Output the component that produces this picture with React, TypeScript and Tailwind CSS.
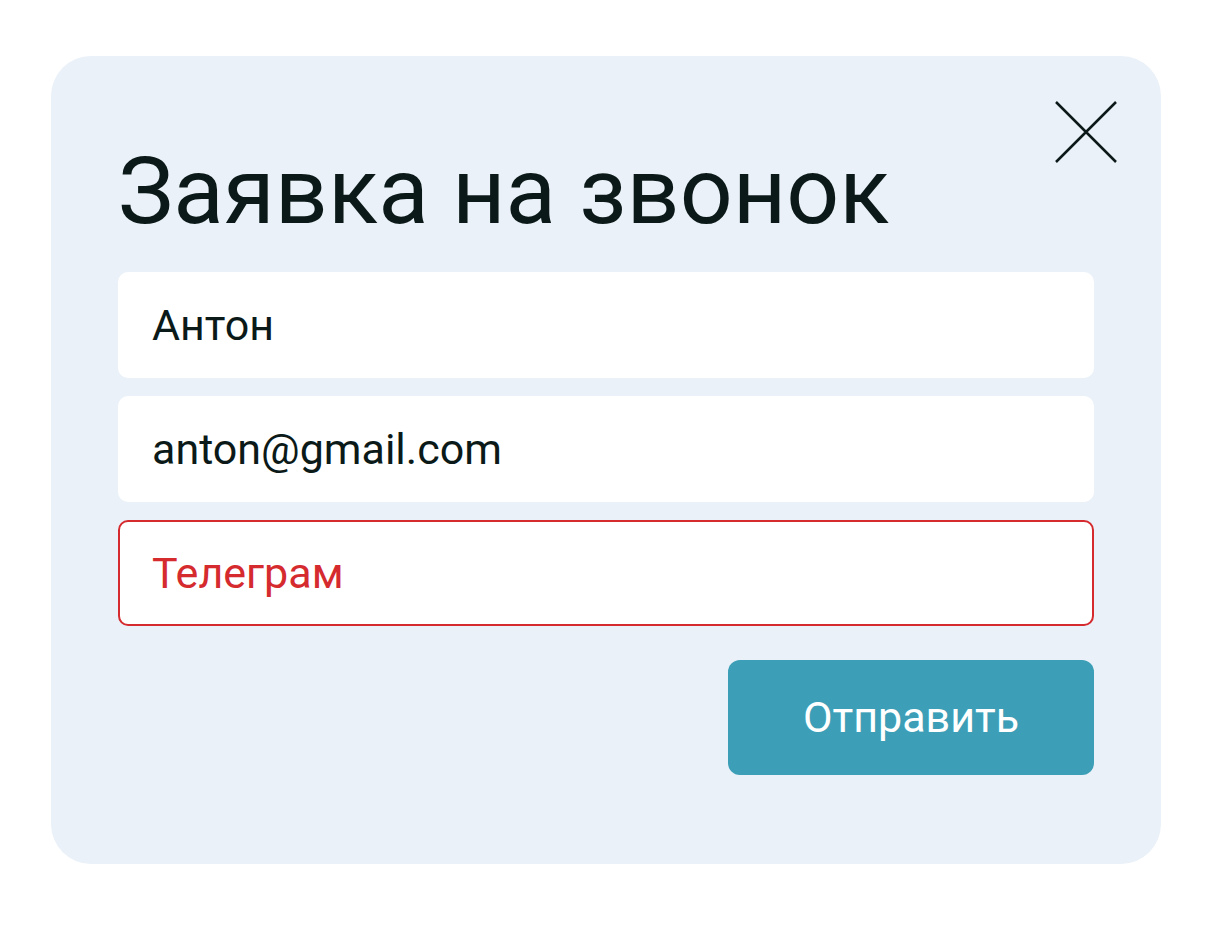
import React from "react";

export default function App() {
  const font = { fontFamily: "Roboto, 'Noto Sans', sans-serif" };
  return (
    <div className="w-[1216px] h-[940px] bg-white pt-[56px] pl-[51px]" style={font}>
      <div className="w-[1110px] h-[808px] bg-[#eaf1f9] rounded-[40px] pl-[67px] pr-[67px] pt-[44px] relative">
        <button className="absolute right-[44px] top-[45px] w-[62px] h-[62px]">
          <svg width="62" height="62" viewBox="0 0 62 62" fill="none">
            <path d="M1 1L61 61M61 1L1 61" stroke="#0b1a18" strokeWidth="2.5" />
          </svg>
        </button>
        <h1 className="text-[93px] leading-[1] text-[#0b1a18] font-normal mt-[45px] mb-0">
          Заявка на звонок
        </h1>
        <div className="flex flex-col gap-[18px] mt-[34px]">
          <div className="h-[106px] bg-white rounded-[10px] flex items-center pl-[34px] text-[43px] text-[#0b1a18]">
            Антон
          </div>
          <div className="h-[106px] bg-white rounded-[10px] flex items-center pl-[34px] text-[43px] text-[#0b1a18]">
            anton@gmail.com
          </div>
          <div className="h-[106px] bg-white rounded-[10px] border-2 border-[#d52a2e] flex items-center pl-[32px] text-[43px] text-[#d52a2e]">
            Телеграм
          </div>
        </div>
        <div className="flex justify-end mt-[34px]">
          <button className="w-[366px] h-[115px] bg-[#3c9fb7] rounded-[12px] text-white text-[43px]">
            Отправить
          </button>
        </div>
      </div>
    </div>
  );
}
